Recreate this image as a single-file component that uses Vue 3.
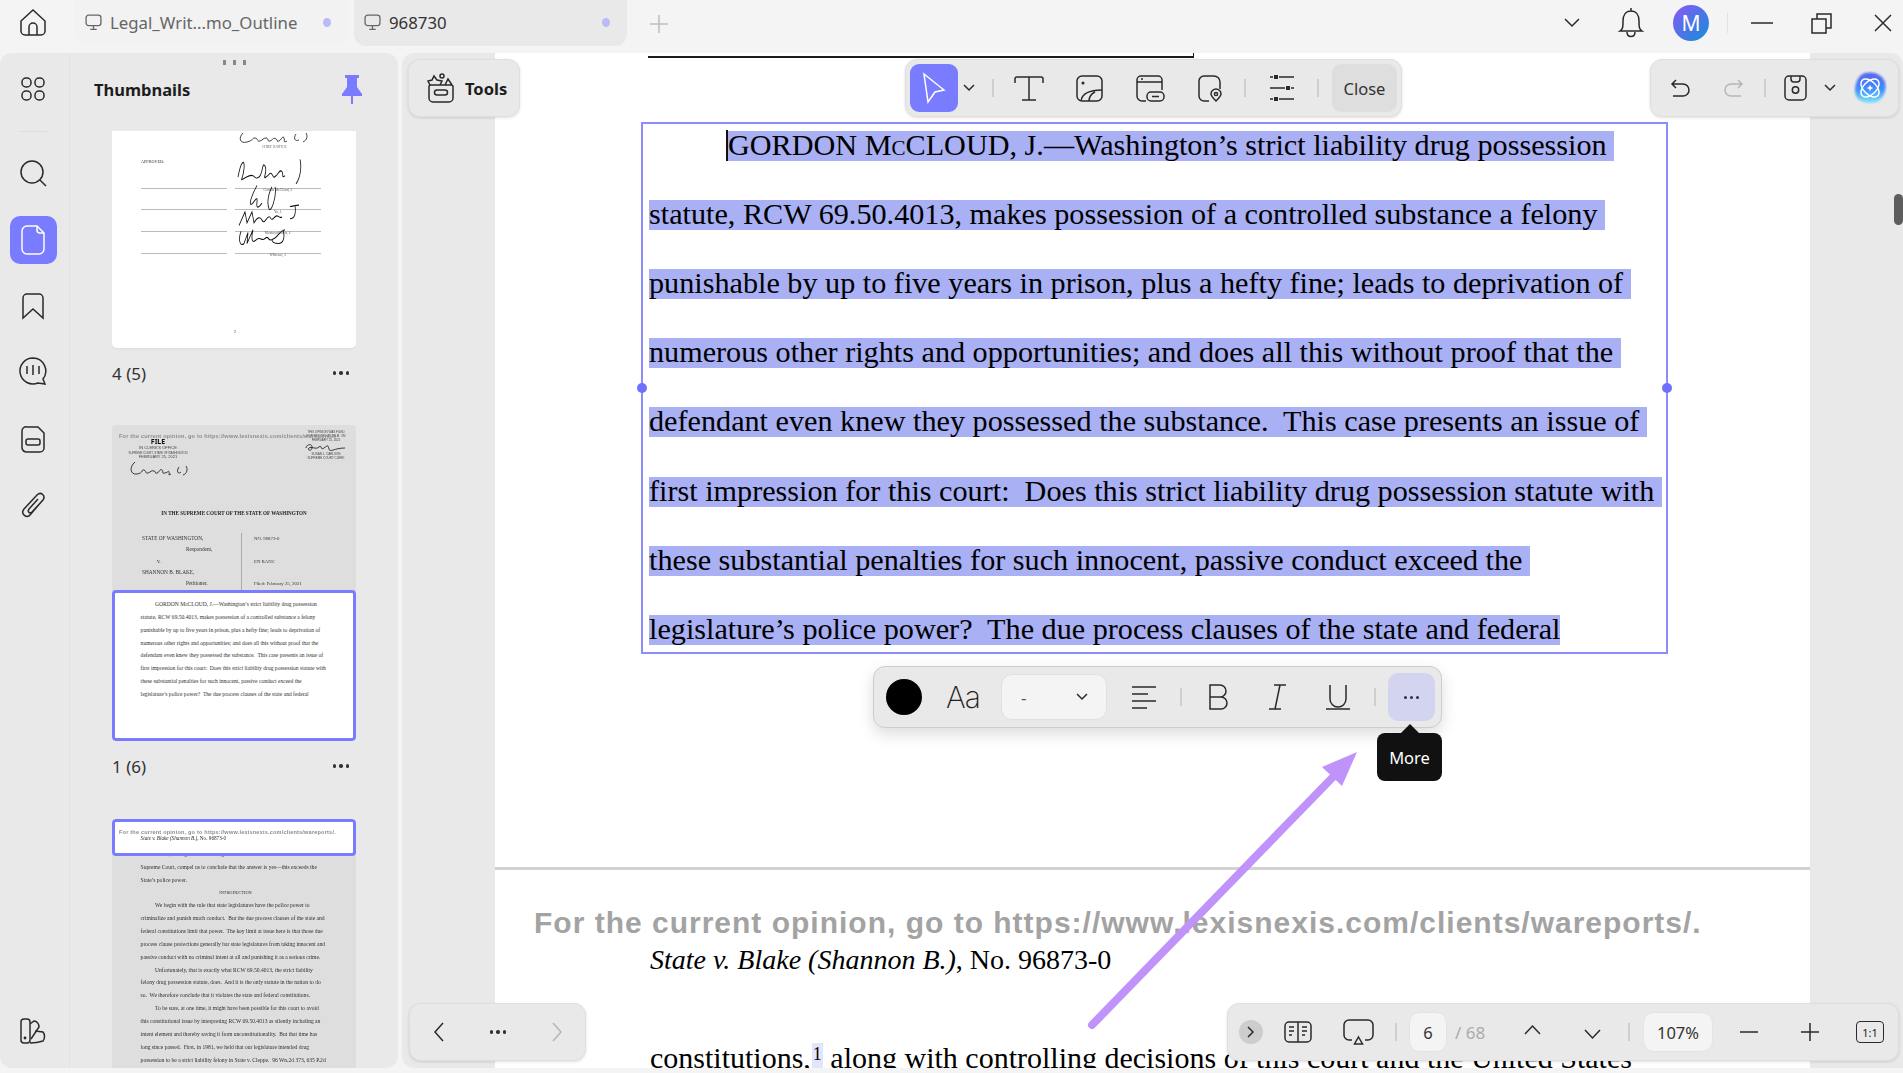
<template>
  <div class="app">
    <header class="topbar">
      <svg class="ic home" viewBox="0 0 28 28"><path d="M2 13 14 2l12 11v10a4 4 0 0 1-4 4H6a4 4 0 0 1-4-4ZM10 27v-8a4 4 0 0 1 8 0v8" /></svg>
      <div class="tab tab-off">
        <svg class="ic mon" viewBox="0 0 16 16"><rect x="1" y="1" width="14" height="10" rx="2.5" /><path d="M8 11v3M5 14.5h6" /></svg>
        <span>Legal_Writ...mo_Outline</span>
        <i class="tab-dot"></i>
      </div>
      <div class="tab tab-on">
        <svg class="ic mon" viewBox="0 0 16 16"><rect x="1" y="1" width="14" height="10" rx="2.5" /><path d="M8 11v3M5 14.5h6" /></svg>
        <span>968730</span>
        <i class="tab-dot"></i>
      </div>
      <svg class="ic plus" viewBox="0 0 18 18"><path d="M9 0v18M0 9h18" /></svg>
      <div class="top-right">
        <svg class="ic t-chev" viewBox="0 0 16 10"><path d="M1 1l7 7 7-7" /></svg>
        <svg class="ic bell" viewBox="0 0 24 30"><path d="M1 23c3-2 3-4 3-10C4 7 7 3 12 3s8 4 8 10c0 6 0 8 3 10ZM12 0v3M8 24c0 6 8 6 8 0" /></svg>
        <div class="avatar">M</div>
        <i class="win-sep"></i>
        <svg class="ic w-min" viewBox="0 0 22 2"><path d="M0 1h22" /></svg>
        <svg class="ic w-res" viewBox="0 0 21 21"><rect x="1" y="6" width="14" height="14" /><path d="M6 6V1h14v14h-5" /></svg>
        <svg class="ic w-cls" viewBox="0 0 18 18"><path d="M1 1l16 16M17 1 1 17" /></svg>
      </div>
    </header>

    <div class="body">
      <aside class="side">
        <nav class="rail">
          <svg class="ic r-grid" viewBox="0 0 24 24"><rect x="1" y="1" width="9" height="9" rx="4" /><rect x="14" y="1" width="9" height="9" rx="4" /><rect x="1" y="14" width="9" height="9" rx="4" /><rect x="14" y="14" width="9" height="9" rx="4" /></svg>
          <i class="rail-sep"></i>
          <svg class="ic r-search" viewBox="0 0 27 27"><circle cx="12" cy="12" r="11" /><path d="M20 20l6 6" /></svg>
          <div class="rail-on">
            <svg class="ic r-doc" viewBox="0 0 24 30"><path d="M6 1h10l7 7v16a5 5 0 0 1-5 5H6a5 5 0 0 1-5-5V6a5 5 0 0 1 5-5ZM16 1v4a3 3 0 0 0 3 3h4" /></svg>
          </div>
          <svg class="ic r-mark" viewBox="0 0 22 27"><path d="M1 25V5a4 4 0 0 1 4-4h12a4 4 0 0 1 4 4v20l-10-9Z" /></svg>
          <svg class="ic r-chat" viewBox="0 0 30 28"><path d="M15 1a13 13 0 1 0 5 25l7 1-2-5a13 13 0 0 0-10-21ZM9 9v8M15 8v10M21 9v8" /></svg>
          <svg class="ic r-file" viewBox="0 0 24 27"><path d="M6 1h11l6 6v15a4 4 0 0 1-4 4H6a5 5 0 0 1-5-4V5a4 4 0 0 1 5-4Z" /><rect x="5" y="13" width="14" height="6" rx="2" /></svg>
          <svg class="ic r-clip" viewBox="0 0 24 27"><path d="M21 9 9 23c-3 4-10-1-6-6L16 3c4-4 9 1 6 5L11 20c-2 2-5 0-3-3l9-10" /></svg>
          <svg class="ic r-book" viewBox="0 0 26 26"><rect x="1" y="1" width="9" height="24" rx="3" /><path d="M10 6l4-3c3 0 5 3 5 6l-8 12M15 13l8 1c2 2 2 7 0 9-3 1-9 2-13 2" /><circle cx="5" cy="20" r=".7" /></svg>
        </nav>

        <div class="thumbs">
          <i class="grip"></i>
          <div class="thumbs-head">
            <b>Thumbnails</b>
            <svg class="pin" viewBox="0 0 20 29"><path d="M3 0h14v3h-2v9l5 7v2H11v8H9v-8H0v-2l5-7V3H3Z" /></svg>
          </div>

          <div class="thumb-list">
            <div class="thumb thumb-cut">
              <svg class="sig sig-top" viewBox="0 0 80 14"><path d="M6 2C1 7 3 13 10 11s5-4 8-4 2 4 5 3 3-3 6-3 1 4 4 3 3-4 6-2 0 3 3 2c3-2 4-6 5-3s-1 5 3 3m9-7c-3 4-1 8 3 6m7-7c2 3 1 7-3 9" /></svg>
              <div class="sig-chief">CHIEF JUSTICE</div>
              <div class="approved">APPROVED:</div>
              <div class="sign-grid">
                <template v-for="s in firmas" :key="s.nombre">
                  <i class="sign-left"></i>
                  <div class="sign-right">
                    <svg class="sig" viewBox="0 0 86 22" preserveAspectRatio="none"><path :d="s.trazo" /></svg>
                    <span>{{ s.nombre }}</span>
                  </div>
                </template>
              </div>
              <div class="thumb-num">2</div>
            </div>
            <div class="thumb-label"><span>4 (5)</span><i class="dots"><u></u><u></u><u></u></i></div>

            <div class="thumb">
              <div class="t-head">
                <div class="t-water">For the current opinion, go to https://www.lexisnexis.com/clients/wareports/.</div>
                <div class="t-stamps">
                  <div class="stamp-l">
                    <b>FILE</b>
                    <span>IN CLERK'S OFFICE</span>
                    <small>SUPREME COURT, STATE OF WASHINGTON</small>
                    <span>FEBRUARY 25, 2021</span>
                    <svg class="sig sig-c" viewBox="0 0 60 18"><path d="M7 2C1 7 2 15 9 14s4-5 7-4 1 4 4 3 3-3 6-2 0 3 3 2 3-5 5-3-1 4 3 3 3-3 4-1-2 4 2 2m8-7c-3 4-1 8 2 5m5-6c2 3 1 8-3 9" /></svg>
                  </div>
                  <div class="stamp-r">
                    <span>THIS OPINION WAS FILED</span>
                    <span>FOR RECORD AT 8 A.M. ON</span>
                    <span>FEBRUARY 25, 2021</span>
                    <svg class="sig sig-d" viewBox="0 0 44 8"><path d="M2 5c1-5 7-4 6 0s-5 2-3 0 7 2 10-1 1 4 5 1 4-3 5 1 5-1 16-1" /></svg>
                    <span>SUSAN L. CARLSON</span>
                    <span>SUPREME COURT CLERK</span>
                  </div>
                </div>
                <div class="t-title">IN THE SUPREME COURT OF THE STATE OF WASHINGTON</div>
                <div class="t-case">
                  <div class="case-l">
                    <p>STATE OF WASHINGTON,</p>
                    <p class="in2">Respondent,</p>
                    <p class="in1">v.</p>
                    <p>SHANNON B. BLAKE,</p>
                    <p class="in2">Petitioner.</p>
                  </div>
                  <div class="case-r">
                    <p>NO. 96873-0</p>
                    <p>EN BANC</p>
                    <p>Filed: February 25, 2021</p>
                  </div>
                </div>
              </div>
              <div class="t-win t-win-a">
                <p v-for="(l, i) in lineas" :key="i" class="t-line" :class="{ sangria: i === 0 }">{{ l }}</p>
              </div>
            </div>
            <div class="thumb-label second"><span>1 (6)</span><i class="dots"><u></u><u></u><u></u></i></div>

            <div class="thumb thumb-last">
              <div class="t-win t-win-b">
                <div class="t-water w2">For the current opinion, go to https://www.lexisnexis.com/clients/wareports/.</div>
                <p class="t-line"><em>State v. Blake (Shannon B.)</em>, No. 96873-0</p>
              </div>
              <div class="t-rest">
                <p v-for="l in lineas7" :key="l.t" class="t-line" :class="{ sangria: l.s, centro: l.c }">{{ l.t }}</p>
              </div>
            </div>
          </div>
        </div>
      </aside>

      <main class="viewer">
        <div class="page">
          <div class="sheet">
            <i class="prev-rule"></i>
            <div class="doc-lines">
              <div class="doc-line first">
                <i class="caret"></i>
                <span class="sel">GORDON M<span class="sc">c</span>CLOUD, J.—Washington’s strict liability drug possession </span>
              </div>
              <div v-for="l in lineasDoc" :key="l" class="doc-line"><span class="sel">{{ l }}</span></div>
            </div>
          </div>
          <div class="sheet2">
            <div class="water">For the current opinion, go to https://www.lexisnexis.com/clients/wareports/.</div>
            <div class="doc-plain state"><em>State v. Blake (Shannon B.)</em>, No. 96873-0</div>
            <div class="doc-plain cut">constitutions,<sup class="foot">1</sup> along with controlling decisions of this court and the United States</div>
          </div>
        </div>

        <div class="sel-box"><i class="handle h-l"></i><i class="handle h-r"></i></div>

        <div class="float f-tools">
          <svg class="ic tools-ic" viewBox="0 0 28 30"><path d="M2 14a2 2 0 0 1 2-2h20a2 2 0 0 1 2 2v11a4 4 0 0 1-4 4H6a4 4 0 0 1-4-4ZM10 17h8a1.500 1.500 0 0 1 0 5h-8a1.500 1.500 0 0 1 0-5ZM3 12 1 8l4-1 2-4 3 4 5 1-2 4M18 12l3-6 4 6" /><circle cx="15" cy="3" r="2" /></svg>
          <b>Tools</b>
        </div>

        <div class="float f-main">
          <div class="btn-sel">
            <svg class="ic cursor" viewBox="0 0 24 30"><path d="M2 1l20 16-9 2-7 10Z" /></svg>
          </div>
          <svg class="ic chev m5" viewBox="0 0 12 8"><path d="M1 1l5 5 5-5" /></svg>
          <i class="tsep m17"></i>
          <svg class="ic ti-t m20" viewBox="0 0 30 25"><path d="M1 7V3a2 2 0 0 1 2-2h24a2 2 0 0 1 2 2v4M15 1v23M8 24h14" /></svg>
          <svg class="ic ti-n m32" viewBox="0 0 27 27"><rect x="1" y="1" width="25" height="25" rx="5" /><circle cx="7" cy="8" r=".8" /><path d="M5 26c1-7 8-11 21-11M13 26c0-4 2-7 6-9" /></svg>
          <svg class="ic ti-l m33" viewBox="0 0 29 27"><path d="M10 26H6a5 5 0 0 1-5-5V5a4 4 0 0 1 4-4h17a4 4 0 0 1 4 4v10M1 7h25M5 4h2" /><rect x="11" y="17" width="17" height="9" rx="4" /><path d="M16 21.500h7" /></svg>
          <svg class="ic ti-p m33" viewBox="0 0 25 27"><path d="M11 26H6a5 5 0 0 1-5-5V6a5 5 0 0 1 5-5h10a6 6 0 0 1 6 6v7" /><path d="M18 26c-3-3-5-5-5-7a5 5 0 0 1 10 0c0 2-2 4-5 7Z" /><circle cx="18" cy="19" r="1.600" /></svg>
          <i class="tsep m21"></i>
          <svg class="ic ti-s m24" viewBox="0 0 24 24"><path d="M0 1h3M9 1h15M0 12h15M21 12h3M0 23h3M9 23h15" /><path class="knob" d="M4 -1h4v4H4ZM16 10h4v4h-4ZM4 21h4v4H4Z" /></svg>
          <i class="tsep m23"></i>
          <div class="btn-close m13">Close</div>
        </div>

        <div class="float f-right">
          <svg class="ic ti-u" viewBox="0 0 18 18"><path d="M5 1 1 5l4 4M1 5h11a5 5 0 0 1 0 12H2" /></svg>
          <svg class="ic ti-u off m36" viewBox="0 0 18 18"><path d="M13 1l4 4-4 4M17 5H6a5 5 0 0 0 0 12h10" /></svg>
          <i class="tsep m21"></i>
          <svg class="ic ti-save m18" viewBox="0 0 23 26"><rect x="1" y="1" width="21" height="24" rx="4" /><path d="M7 1v3a3 3 0 0 0 3 3h3a3 3 0 0 0 3-3V1" /><circle cx="11.500" cy="15" r="3.200" /></svg>
          <svg class="ic chev m17" viewBox="0 0 12 8"><path d="M1 1l5 5 5-5" /></svg>
          <svg class="ai m17" viewBox="0 0 34 34">
            <defs>
              <linearGradient id="aiG" x1="0" y1="0" x2="0" y2="1"><stop offset="0" stop-color="#5a62f2" /><stop offset=".55" stop-color="#3e8ff8" /><stop offset="1" stop-color="#7fe6fb" /></linearGradient>
            </defs>
            <path class="ai-blob" d="M12 2c8-2 17 1 20 9 2 8-1 16-8 20-8 2-17 1-21-6C0 17 4 4 12 2Z" fill="url(#aiG)" />
            <g fill="none" stroke="#fff" stroke-width="1.400"><ellipse cx="17" cy="17" rx="11" ry="6.500" transform="rotate(45 17 17)" /><ellipse cx="17" cy="17" rx="11" ry="6.500" transform="rotate(-45 17 17)" /></g>
            <path d="M17 14.500v5M14.500 17h5" stroke="#fff" stroke-width="1.500" />
          </svg>
        </div>

        <div class="float f-nav">
          <svg class="ic nav-ch" viewBox="0 0 10 20"><path d="M9 1 1 10l8 9" /></svg>
          <i class="dots"><u></u><u></u><u></u></i>
          <svg class="ic nav-ch off" viewBox="0 0 10 20"><path d="M1 1l8 9-8 9" /></svg>
        </div>

        <div class="float f-pages">
          <div class="round-btn"><svg class="ic" viewBox="0 0 8 12"><path d="M1 1l5 5-5 5" /></svg></div>
          <svg class="ic b-book m21" viewBox="0 0 28 22"><rect x="1" y="1" width="26" height="20" rx="4" /><path d="M14 1v20M5 6h5M5 10h5M5 14h3M18 6h5M18 10h5M18 14h3" /></svg>
          <svg class="ic b-pres m31" viewBox="0 0 31 26"><path d="M9 21H6a5 5 0 0 1-5-5V6a5 5 0 0 1 5-5h19a5 5 0 0 1 5 5v10a5 5 0 0 1-5 5h-3" /><path d="M15.500 18l4 7h-8Z" /></svg>
          <i class="tsep m21"></i>
          <div class="num-box m12 w38">6</div>
          <span class="of m8">/ 68</span>
          <svg class="ic b-ch m39" viewBox="0 0 17 10"><path d="M1 9l7.500-8L16 9" /></svg>
          <svg class="ic b-ch m43 low" viewBox="0 0 17 10"><path d="M1 1l7.500 8L16 1" /></svg>
          <i class="tsep m27"></i>
          <div class="num-box m13 w70">107%</div>
          <svg class="ic b-pm m27" viewBox="0 0 18 18"><path d="M0 9h18" /></svg>
          <svg class="ic b-pm m43" viewBox="0 0 18 18"><path d="M0 9h18M9 0v18" /></svg>
          <div class="one m37">1:1</div>
        </div>

        <div class="format">
          <i class="swatch"></i>
          <span class="aa">Aa</span>
          <div class="font-sel"><span>-</span><svg class="ic chev" viewBox="0 0 12 8"><path d="M1 1l5 5 5-5" /></svg></div>
          <svg class="ic f-align m25" viewBox="0 0 24 23"><path d="M0 1h24M0 8h16M0 15h24M0 22h15" /></svg>
          <i class="tsep m24"></i>
          <svg class="ic f-b m27" viewBox="0 0 20 26"><path d="M1 1h10a6 6 0 0 1 0 12H1ZM1 13h11a6 6 0 0 1 0 12H1Z" /></svg>
          <svg class="ic f-i m40" viewBox="0 0 17 26"><path d="M5 1h12M0 25h12M11 1 6 25" /></svg>
          <svg class="ic f-u m40" viewBox="0 0 24 26"><path d="M4 1v14a8 8 0 0 0 16 0V1M0 25h24" /></svg>
          <i class="tsep m24"></i>
          <div class="btn-more"><i class="dots"><u></u><u></u><u></u></i></div>
        </div>

        <div class="tip">More</div>

        <i class="scroll-thumb"></i>

        <svg class="arrow" viewBox="0 0 1501 1015">
          <path d="M690 972 931 724" stroke="#c093fb" stroke-width="8" stroke-linecap="round" fill="none" />
          <path d="M955 699 920 714 940 733Z" fill="#c093fb" />
        </svg>
      </main>
    </div>
  </div>
</template>

<script setup>
const lineasDoc = [
  'statute, RCW 69.50.4013, makes possession of a controlled substance a felony ',
  'punishable by up to five years in prison, plus a hefty fine; leads to deprivation of ',
  'numerous other rights and opportunities; and does all this without proof that the ',
  'defendant even knew they possessed the substance.  This case presents an issue of ',
  'first impression for this court:  Does this strict liability drug possession statute with ',
  'these substantial penalties for such innocent, passive conduct exceed the ',
  'legislature’s police power?  The due process clauses of the state and federal'
]

const lineas = [
  'GORDON McCLOUD, J.—Washington’s strict liability drug possession',
  ...lineasDoc
]

const lineas7 = [
  { t: 'constitutions,1 along with controlling decisions of this court and the United States' },
  { t: 'Supreme Court, compel us to conclude that the answer is yes—this exceeds the' },
  { t: 'State’s police power.' },
  { t: 'INTRODUCTION', c: true },
  { t: 'We begin with the rule that state legislatures have the police power to', s: true },
  { t: 'criminalize and punish much conduct.  But the due process clauses of the state and' },
  { t: 'federal constitutions limit that power.  The key limit at issue here is that those due' },
  { t: 'process clause protections generally bar state legislatures from taking innocent and' },
  { t: 'passive conduct with no criminal intent at all and punishing it as a serious crime.' },
  { t: 'Unfortunately, that is exactly what RCW 69.50.4013, the strict liability', s: true },
  { t: 'felony drug possession statute, does.  And it is the only statute in the nation to do' },
  { t: 'so.  We therefore conclude that it violates the state and federal constitutions.' },
  { t: 'To be sure, at one time, it might have been possible for this court to avoid', s: true },
  { t: 'this constitutional issue by interpreting RCW 69.50.4013 as silently including an' },
  { t: 'intent element and thereby saving it from unconstitutionality.  But that time has' },
  { t: 'long since passed.  First, in 1981, we held that our legislature intended drug' },
  { t: 'possession to be a strict liability felony in State v. Cleppe.  96 Wn.2d 373, 635 P.2d' }
]

const firmas = [
  { nombre: 'Gordon McCloud, J.', trazo: 'M3 14C6 2 10 0 9 8s-5 9 0 7 6-3 9-2 2 3 6 1 3-12 6-8-3 10 1 8 4-4 6-2 1 3 4 1 4-5 6-3-1 5 3 3m15-12c2 6 0 14-4 18' },
  { nombre: 'Yu, J.', trazo: 'M22 4c-6 8-8 14-6 14s7-8 6-2 2 4 5 1m10-12c-4 6-5 12-3 16s8-10 6-16' },
  { nombre: 'Montoya-Lewis, J.', trazo: 'M4 18 10 8l2 8 5-8 2 8c3-4 6-5 8-2s3 0 6-2 2 3 5 1 3-3 7-1h2m8-8c3 0 5-1 9-1m-4 0c1 6 0 10-5 10' },
  { nombre: 'Whitener, J.', trazo: 'M6 6c-3 6-1 12 3 9l4-8-1 8 6-10c-2 6-1 10 2 8s4-2 7-1 4-3 6-1 3 2 7 0 4-5 10-6m-2 0c2 5 1 10-5 10s-8-3-3-4' }
]
</script>

<style scoped>
.app { width: 1903px; height: 1073px; background: #f4f4f4; overflow: hidden; font-family: "Noto Sans", sans-serif; color: #222; }
.ic { fill: none; stroke: #2a2a2a; stroke-width: 1.5; flex: none; display: block; overflow: visible; }

.topbar { height: 53px; display: flex; align-items: flex-start; }
.home { width: 28px; height: 28px; margin: 8px 0 0 19px; }
.tab { width: 273px; height: 46px; border-radius: 0 0 12px 12px; display: flex; align-items: center; padding: 0 17px 2px 10px; box-sizing: border-box; font-size: 16.800px; }
.tab span { margin-left: 8px; flex: 1; white-space: nowrap; }
.tab-off { margin-left: 28px; background: #f2f2f2; color: #666; }
.tab-on { margin-left: 6px; background: #e9e9e9; color: #333; }
.mon { width: 17px; height: 17px; stroke: #666; stroke-width: 1.2; }
.tab-dot { width: 8px; height: 9px; border-radius: 50%; background: #b9bbf6; }
.plus { width: 18px; height: 18px; margin: 15px 0 0 23px; stroke: #bdbdbd; }
.top-right { margin-left: auto; display: flex; align-items: center; height: 46px; }
.t-chev { width: 16px; height: 10px; margin-right: 39px; }
.bell { width: 24px; height: 30px; margin-right: 30px; }
.avatar { width: 36px; height: 36px; border-radius: 50%; background: linear-gradient(135deg, #8a58f5, #128fd8); color: #fff; font-size: 21px; display: flex; align-items: center; justify-content: center; }
.win-sep { width: 1px; height: 20px; background: #e2e2e2; margin-left: 18px; }
.w-min { width: 22px; height: 2px; margin-left: 23px; }
.w-res { width: 21px; height: 21px; margin-left: 38px; }
.w-cls { width: 18px; height: 18px; margin: 0 11px 0 42px; }

.body { height: 1015px; display: flex; }
.side { width: 398px; flex: none; background: #e9e9e9; border-radius: 12px; display: flex; overflow: hidden; }
.rail { width: 70px; flex: none; border-right: 1px solid #e2e2e2; display: flex; flex-direction: column; align-items: center; box-sizing: border-box; padding-right: 3px; }
.r-grid { width: 24px; height: 24px; margin-top: 24px; }
.rail-sep { width: 27px; height: 1px; background: #dedede; margin-top: 30px; }
.r-search { width: 27px; height: 27px; margin-top: 28px; }
.rail-on { width: 47px; height: 48px; margin-top: 29px; background: #7a7cff; border-radius: 10px; display: flex; align-items: center; justify-content: center; flex: none; }
.r-doc { width: 24px; height: 30px; stroke: #fff; }
.r-mark { width: 22px; height: 27px; margin-top: 29px; }
.r-chat { width: 30px; height: 28px; margin-top: 37px; }
.r-file { width: 24px; height: 27px; margin-top: 41px; }
.r-clip { width: 24px; height: 27px; margin-top: 39px; }
.r-book { width: 26px; height: 26px; margin-top: auto; margin-bottom: 24px; }

.thumbs { flex: 1; position: relative; min-width: 0; }
.grip { position: absolute; left: 153px; top: 7px; width: 23px; height: 5px; background: repeating-linear-gradient(90deg, #888 0 3px, transparent 3px 10px); }
.thumbs-head { height: 78px; display: flex; align-items: center; justify-content: space-between; padding: 0 36px 6px 24px; box-sizing: border-box; font-size: 16.500px; color: #1d1d1d; }
.pin { width: 20px; height: 29px; fill: #7a7cff; }
.thumb-list { margin-left: 42px; width: 244px; height: 937px; overflow: hidden; }
.thumb { width: 244px; height: 316px; background: #dedede; border-radius: 4px; font-family: "Liberation Serif", serif; font-size: 5.300px; color: #333; overflow: hidden; filter: blur(.25px); }
.thumb p { margin: 0; }
.thumb-cut { height: 217px; background: #fff; border-radius: 0 0 5px 5px; position: relative; box-shadow: 0 1px 3px rgba(0, 0, 0, .06); }
.thumb-label { height: 50px; margin-bottom: 27px; display: flex; align-items: center; justify-content: space-between; font-size: 17px; color: #333; padding-right: 7px; }
.thumb-label.second { margin-bottom: 28px; }
.dots { display: flex; gap: 3px; }
.dots u { width: 3.500px; height: 3.500px; border-radius: 50%; background: #333; display: block; }

.sig { fill: none; stroke: #111; stroke-width: .8; display: block; }
.sig-top { width: 80px; height: 14px; margin: 0 0 0 125px; }
.sig-chief { margin-left: 150px; font-size: 3.500px; color: #666; }
.approved { margin: 10px 0 0 29px; font-size: 4.200px; }
.sign-grid { margin: 3px 0 0 29px; display: grid; grid-template-columns: 86px 86px; column-gap: 8px; }
.sign-left { height: 21.700px; border-bottom: 1.500px solid #bbb; box-sizing: border-box; }
.sign-right { height: 21.700px; border-bottom: 1.500px solid #bbb; box-sizing: border-box; position: relative; }
.sign-right svg { width: 86px; height: 30px; position: absolute; left: 0; top: -9px; }
.sign-right span { position: absolute; left: 0; right: 0; top: 21px; text-align: center; font-size: 3.500px; color: #555; }
.thumb-num { position: absolute; left: 122px; top: 198px; font-size: 4px; }

.t-head { height: 165px; position: relative; overflow: hidden; }
.t-water { position: absolute; left: 7px; top: 8px; font: bold 5.570px "Liberation Sans", sans-serif; color: #8d8d8d; letter-spacing: .19px; white-space: nowrap; }
.t-water.w2 { top: 7px; left: 4px; }
.t-stamps { display: flex; justify-content: space-between; padding: 13px 7px 0 12px; }
.stamp-l { display: flex; flex-direction: column; align-items: center; font: 4px "Liberation Sans", sans-serif; color: #444; line-height: 4.600px; width: 68px; }
.stamp-l b { font: bold 7px "Noto Sans", sans-serif; color: #111; line-height: 8px; }
.stamp-l small { font-size: 2.800px; white-space: nowrap; }
.sig-c { width: 60px; height: 18px; }
.stamp-r { display: flex; flex-direction: column; align-items: center; font: 3px "Liberation Sans", sans-serif; color: #444; line-height: 4px; margin-top: -8px; width: 46px; white-space: nowrap; }
.sig-d { width: 44px; height: 8px; margin: 1px 0; }
.t-title { position: absolute; left: 0; right: 0; top: 85px; text-align: center; font-weight: bold; font-size: 5.100px; color: #222; }
.t-case { position: absolute; left: 30px; top: 108px; display: grid; grid-template-columns: 100px 100px; }
.case-l { height: 59px; border-right: 1px solid #aaa; line-height: 11.300px; }
.in2 { padding-left: 44px; }
.in1 { padding-left: 15px; }
.case-r { padding: 0 0 0 12px; margin-top: -5px; line-height: 22.500px; white-space: nowrap; font-size: 4.800px; }
.t-win { background: #fff; border: 3px solid #7a7cff; border-radius: 4px; box-sizing: border-box; width: 244px; position: relative; z-index: 1; }
.t-win-a { height: 151px; padding-top: 5px; }
.t-win-b { height: 37px; padding-top: 12px; }
.t-line { margin: 0; padding-left: 25.600px; height: 12.850px; line-height: 12.850px; font-size: 5.570px; white-space: pre; color: #2f2f2f; }
.t-line.sangria { padding-left: 40px; }
.t-line.centro { padding-left: 0; text-align: center; font-size: 4.300px; }
.t-win-b .t-line { height: 8px; line-height: 8px; font-size: 5.200px; }
.t-rest { margin-top: -8px; padding-left: 3px; }

.viewer { width: 1501px; margin-left: 4px; background: #e9e9e9; border-radius: 12px 12px 0 12px; position: relative; overflow: hidden; }
.page { margin: 0 93px; height: 1015px; background: #fff; overflow: hidden; font-family: "Liberation Serif", serif; color: #000; }
.sheet { height: 814px; border-bottom: 3px solid #d2d2d2; box-sizing: content-box; }
.prev-rule { display: block; margin-left: 153px; width: 546px; height: 5px; border-bottom: 2px solid #1c1c1c; border-right: 1px solid #1c1c1c; box-sizing: border-box; }
.doc-lines { margin-top: 53px; padding-left: 154px; }
.doc-line { height: 69.200px; display: flex; align-items: center; font-size: 30.200px; white-space: pre; position: relative; }
.doc-line.first { padding-left: 79px; }
.sel { background: #a9b0f3; height: 30px; line-height: 28px; display: block; }
.sc { font-variant: small-caps; }
.caret { position: absolute; left: 77px; top: 19px; width: 2px; height: 31px; background: #111; }
.sheet2 { padding-top: 36px; }
.water { padding-left: 39px; font: bold 30px/34px "Liberation Sans", sans-serif; letter-spacing: 1px; color: #a3a3a3; white-space: nowrap; }
.doc-plain { padding-left: 155px; font-size: 30px; line-height: 40px; white-space: nowrap; }
.doc-plain.state { font-size: 28px; }
.doc-plain.cut { margin-top: 58px; }
.foot { display: inline-block; width: 11px; height: 28px; background: #e3e5fb; font-size: 18px; line-height: 22px; vertical-align: 8px; text-align: center; margin-left: 1px; }

.sel-box { position: absolute; left: 239px; top: 69px; width: 1027px; height: 532px; border: 2px solid #8a8cff; box-sizing: border-box; }
.handle { position: absolute; top: 259px; width: 10px; height: 10px; border-radius: 50%; background: #6e70ff; }
.h-l { left: -6px; }
.h-r { right: -6px; }

.float { position: absolute; height: 58px; box-sizing: border-box; background: #e9e9e9; border: 1px solid #dfdfdf; border-radius: 12px; box-shadow: 0 1px 3px rgba(0, 0, 0, .12); display: flex; align-items: center; }
.f-tools { left: 6px; top: 6px; width: 112px; padding-left: 18px; font-size: 16.500px; color: #1d1d1d; gap: 10px; }
.tools-ic { width: 28px; height: 30px; }
.f-main { left: 503px; top: 6px; width: 497px; padding-left: 4px; }
.f-right { left: 1248px; top: 6px; width: 249px; padding-left: 20px; }
.f-nav { left: 7px; bottom: 7px; width: 177px; padding: 0 23px 0 24px; justify-content: space-between; }
.f-pages { left: 825px; bottom: 7px; width: 672px; padding-left: 11px; }

.btn-sel { width: 48px; height: 48px; border-radius: 9px; background: #7a7cff; display: flex; align-items: center; justify-content: center; flex: none; }
.cursor { width: 24px; height: 30px; stroke: #fff; }
.chev { width: 12px; height: 8px; }
.tsep { width: 2px; height: 18px; background: #cfcfcf; flex: none; }
.ti-t { width: 30px; height: 25px; }
.ti-n { width: 27px; height: 27px; }
.ti-l { width: 29px; height: 27px; }
.ti-p { width: 25px; height: 27px; }
.ti-s { width: 24px; height: 24px; }
.knob { fill: #2a2a2a; stroke: none; }
.btn-close { width: 65px; height: 48px; border-radius: 9px; background: #dedede; font-size: 16.500px; color: #333; display: flex; align-items: center; justify-content: center; flex: none; }
.ti-u { width: 18px; height: 18px; }
.off { stroke: #b5b5b5; }
.ti-save { width: 23px; height: 26px; }
.ai { width: 34px; height: 34px; flex: none; }
.ai-blob { filter: blur(.8px); }
.nav-ch { width: 10px; height: 20px; }

.round-btn { width: 24px; height: 24px; border-radius: 50%; background: #cdcdcd; display: flex; align-items: center; justify-content: center; flex: none; }
.round-btn svg { width: 8px; height: 12px; }
.b-book { width: 28px; height: 22px; }
.b-pres { width: 31px; height: 26px; }
.num-box { height: 40px; background: #f4f4f4; border: 1px solid #e4e4e4; border-radius: 11px; font-size: 16.500px; color: #333; display: flex; align-items: center; justify-content: center; box-sizing: border-box; flex: none; }
.w38 { width: 38px; }
.w70 { width: 70px; }
.of { font-size: 17px; color: #ababab; width: 30px; white-space: nowrap; }
.b-ch { width: 17px; height: 10px; margin-top: -4px; }
.b-ch.low { margin-top: 4px; }
.b-pm { width: 18px; height: 18px; }
.one { width: 28px; height: 22px; border: 1.500px solid #2a2a2a; border-radius: 4px; font-size: 11px; color: #222; display: flex; align-items: center; justify-content: center; box-sizing: border-box; flex: none; }

.format { position: absolute; left: 471px; top: 613px; width: 569px; height: 62px; box-sizing: border-box; background: #e9e9e9; border: 1.500px solid #cdcdcd; border-radius: 12px; box-shadow: 0 6px 16px rgba(0, 0, 0, .14); display: flex; align-items: center; padding-left: 12px; }
.swatch { width: 36px; height: 36px; border-radius: 50%; background: #000; flex: none; }
.aa { font-size: 30px; font-family: "Inter", sans-serif; font-weight: 200; color: #222; margin-left: 24px; width: 34px; letter-spacing: -1px; white-space: nowrap; }
.font-sel { width: 106px; height: 46px; margin-left: 21px; background: #f4f4f4; border: 1px solid #e0e0e0; border-radius: 11px; display: flex; align-items: center; justify-content: space-between; padding: 0 18px 0 19px; box-sizing: border-box; font-size: 17px; color: #555; flex: none; }
.f-align { width: 24px; height: 23px; }
.f-b { width: 20px; height: 26px; }
.f-i { width: 17px; height: 26px; }
.f-u { width: 24px; height: 26px; }
.btn-more { width: 47px; height: 48px; margin-left: 12px; border-radius: 10px; background: #d3d4ef; display: flex; align-items: center; justify-content: center; flex: none; }
.btn-more u { width: 3px; height: 3px; }

.tip { position: absolute; left: 975px; top: 680px; width: 65px; height: 48px; border-radius: 8px; background: #111; color: #fff; font-size: 16.500px; display: flex; align-items: center; justify-content: center; }
.tip::before { content: ""; position: absolute; left: 24px; top: -9px; border: 9px solid transparent; border-top: 0; border-bottom-color: #111; }
.scroll-thumb { position: absolute; right: 0; top: 141px; width: 9px; height: 31px; border-radius: 5px; background: #5d5d5d; }
.arrow { position: absolute; left: 0; top: 0; width: 1501px; height: 1015px; pointer-events: none; }

.m5 { margin-left: 5px; } .m8 { margin-left: 8px; } .m12 { margin-left: 12px; } .m13 { margin-left: 13px; } .m14 { margin-left: 14px; }
.m17 { margin-left: 17px; } .m18 { margin-left: 18px; } .m20 { margin-left: 20px; } .m21 { margin-left: 21px; } .m23 { margin-left: 23px; }
.m24 { margin-left: 24px; } .m25 { margin-left: 25px; } .m27 { margin-left: 27px; } .m31 { margin-left: 31px; } .m32 { margin-left: 32px; }
.m33 { margin-left: 33px; } .m36 { margin-left: 36px; } .m37 { margin-left: 37px; } .m39 { margin-left: 39px; } .m40 { margin-left: 40px; } .m43 { margin-left: 43px; }
</style>

<style>
html, body { margin: 0; background: #f4f4f4; overflow: hidden; }
</style>
